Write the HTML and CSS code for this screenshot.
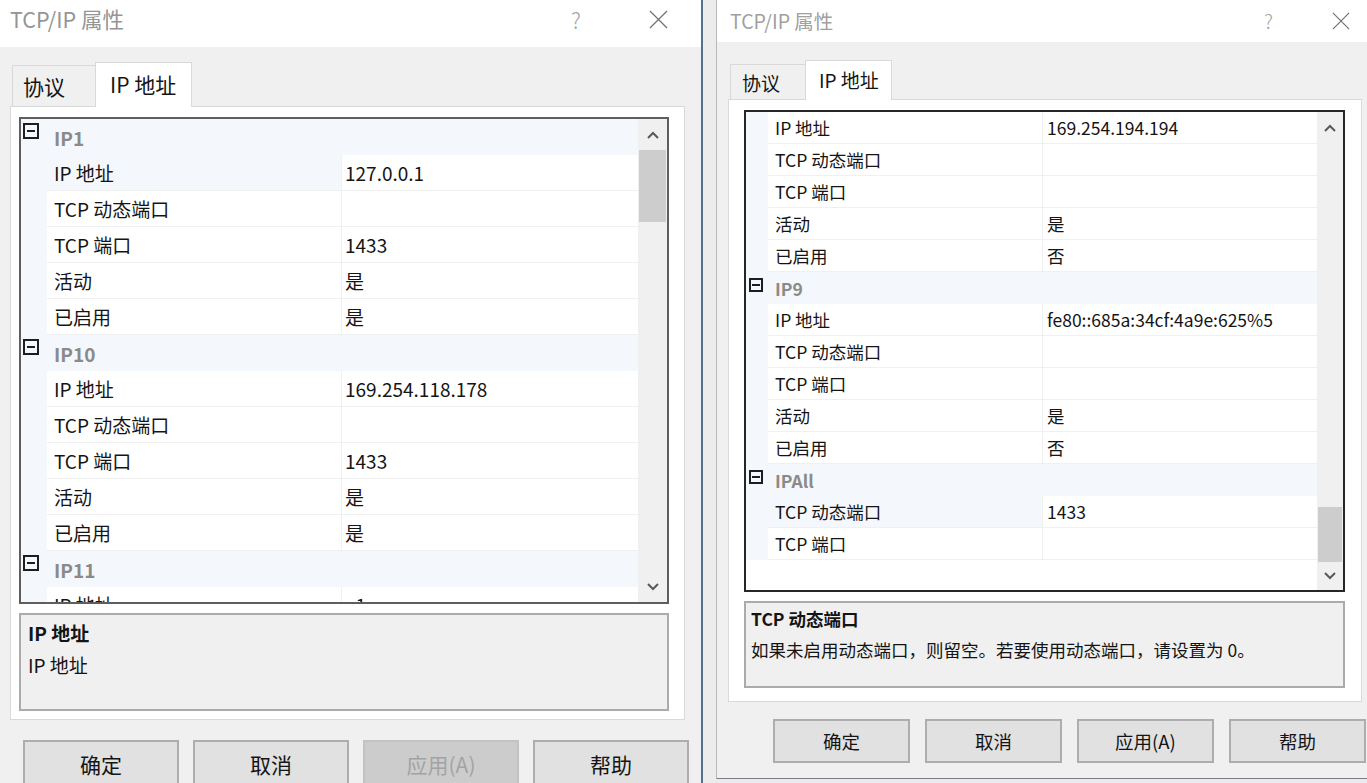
FILE: index.html
```html
<!DOCTYPE html>
<html lang="zh-CN">
<head>
<meta charset="utf-8">
<title>TCP/IP 属性</title>
<link rel="stylesheet" href="styles.css">
</head>
<body>
<div class="screen">
  <div class="win win-a">
    <div class="titlebar">
      <span class="title">TCP/IP 属性</span>
      <span class="help">?</span>
      <svg class="close" viewBox="0 0 20 20"><path d="M1 1L19 19M19 1L1 19"/></svg>
    </div>
    <div class="tabs">
      <div class="tab">协议</div>
      <div class="tab active">IP 地址</div>
    </div>
    <div class="panel">
      <div class="grid">
        <div class="rows">
          <div class="row cat"><div class="gut"><span class="minus"></span></div><div class="cname">IP1</div></div>
          <div class="row sel"><div class="gut"></div><div class="lbl">IP 地址</div><div class="val">127.0.0.1</div></div>
          <div class="row"><div class="gut"></div><div class="lbl">TCP 动态端口</div><div class="val"></div></div>
          <div class="row"><div class="gut"></div><div class="lbl">TCP 端口</div><div class="val">1433</div></div>
          <div class="row"><div class="gut"></div><div class="lbl">活动</div><div class="val">是</div></div>
          <div class="row"><div class="gut"></div><div class="lbl">已启用</div><div class="val">是</div></div>
          <div class="row cat"><div class="gut"><span class="minus"></span></div><div class="cname">IP10</div></div>
          <div class="row"><div class="gut"></div><div class="lbl">IP 地址</div><div class="val">169.254.118.178</div></div>
          <div class="row"><div class="gut"></div><div class="lbl">TCP 动态端口</div><div class="val"></div></div>
          <div class="row"><div class="gut"></div><div class="lbl">TCP 端口</div><div class="val">1433</div></div>
          <div class="row"><div class="gut"></div><div class="lbl">活动</div><div class="val">是</div></div>
          <div class="row"><div class="gut"></div><div class="lbl">已启用</div><div class="val">是</div></div>
          <div class="row cat"><div class="gut"><span class="minus"></span></div><div class="cname">IP11</div></div>
          <div class="row"><div class="gut"></div><div class="lbl">IP 地址</div><div class="val">::1</div></div>
        </div>
        <div class="sb">
          <div class="sb-btn up"><svg viewBox="0 0 12 8"><path d="M1 7L6 2L11 7"/></svg></div>
          <div class="sb-track"><div class="thumb"></div></div>
          <div class="sb-btn down"><svg viewBox="0 0 12 8"><path d="M1 1L6 6L11 1"/></svg></div>
        </div>
      </div>
      <div class="desc">
        <div class="desc-title">IP 地址</div>
        <div class="desc-text">IP 地址</div>
      </div>
    </div>
    <div class="buttons">
      <div class="btn">确定</div>
      <div class="btn">取消</div>
      <div class="btn disabled">应用(A)</div>
      <div class="btn">帮助</div>
    </div>
  </div>

  <div class="divider"></div>
  <div class="gap"></div>

  <div class="win win-b">
    <div class="titlebar">
      <span class="title">TCP/IP 属性</span>
      <span class="help">?</span>
      <svg class="close" viewBox="0 0 20 20"><path d="M1 1L19 19M19 1L1 19"/></svg>
    </div>
    <div class="tabs">
      <div class="tab">协议</div>
      <div class="tab active">IP 地址</div>
    </div>
    <div class="panel">
      <div class="grid">
        <div class="rows">
          <div class="row"><div class="gut"></div><div class="lbl">IP 地址</div><div class="val">169.254.194.194</div></div>
          <div class="row"><div class="gut"></div><div class="lbl">TCP 动态端口</div><div class="val"></div></div>
          <div class="row"><div class="gut"></div><div class="lbl">TCP 端口</div><div class="val"></div></div>
          <div class="row"><div class="gut"></div><div class="lbl">活动</div><div class="val">是</div></div>
          <div class="row"><div class="gut"></div><div class="lbl">已启用</div><div class="val">否</div></div>
          <div class="row cat"><div class="gut"><span class="minus"></span></div><div class="cname">IP9</div></div>
          <div class="row"><div class="gut"></div><div class="lbl">IP 地址</div><div class="val">fe80::685a:34cf:4a9e:625%5</div></div>
          <div class="row"><div class="gut"></div><div class="lbl">TCP 动态端口</div><div class="val"></div></div>
          <div class="row"><div class="gut"></div><div class="lbl">TCP 端口</div><div class="val"></div></div>
          <div class="row"><div class="gut"></div><div class="lbl">活动</div><div class="val">是</div></div>
          <div class="row"><div class="gut"></div><div class="lbl">已启用</div><div class="val">否</div></div>
          <div class="row cat"><div class="gut"><span class="minus"></span></div><div class="cname">IPAll</div></div>
          <div class="row sel"><div class="gut"></div><div class="lbl">TCP 动态端口</div><div class="val">1433</div></div>
          <div class="row"><div class="gut"></div><div class="lbl">TCP 端口</div><div class="val"></div></div>
        </div>
        <div class="sb">
          <div class="sb-btn up"><svg viewBox="0 0 12 8"><path d="M1 7L6 2L11 7"/></svg></div>
          <div class="sb-track"><div class="thumb"></div></div>
          <div class="sb-btn down"><svg viewBox="0 0 12 8"><path d="M1 1L6 6L11 1"/></svg></div>
        </div>
      </div>
      <div class="desc">
        <div class="desc-title">TCP 动态端口</div>
        <div class="desc-text">如果未启用动态端口，则留空。若要使用动态端口，请设置为 0。</div>
      </div>
    </div>
    <div class="buttons">
      <div class="btn">确定</div>
      <div class="btn">取消</div>
      <div class="btn">应用(A)</div>
      <div class="btn">帮助</div>
    </div>
  </div>
</div>
</body>
</html>
```

FILE: styles.css
```css
* { box-sizing: border-box; margin: 0; padding: 0; }

html, body {
  width: 1367px;
  height: 783px;
  overflow: hidden;
}

body {
  background: #e9ebee;
  font-family: "Noto Sans CJK SC", "Noto Sans", sans-serif;
  color: #141414;
}

.screen {
  display: flex;
  align-items: flex-start;
  height: 783px;
}

/* ---------- window ---------- */
.win {
  display: flex;
  flex-direction: column;
  background: #f0f0f0;
  overflow: hidden;
  flex: none;
}

.win-a {
  width: 701px;
  height: 783px;
  --th: 47px; --tpt: 4px; --tfs: 21.5px; --tpl: 10px;
  --help-fs: 22px; --help-mr: 68px; --close: 19px; --close-mr: 33px;
  --tab-fs: 21px; --tabs-mt: 15px; --tabs-ml: 12px; --tabs-h: 44px;
  --tab1-w: 83px; --tab1-h: 41px; --tab1-pl: 10px;
  --tab2-w: 97px; --tab2-h: 45px; --tab2-pl: 14px;
  --panel-ml: 10px; --panel-w: 675px; --panel-h: 614px; --panel-pt: 10px; --panel-pl: 8px;
  --grid-w: 650px; --grid-h: 487px; --grid-b: #5e5e5e;
  --fs: 19px; --row: 36px; --gut: 26px; --lbl: 295px; --vpl: 3px;
  --sb: 29px; --sb-up: 31px; --sb-dn: 31px; --thumb-top: 0px; --thumb-h: 72px;
  --mw: 16px; --mt: 4px; --ml: 2px; --mline: 8px;
  --desc-h: 98px; --desc-pt: 2px; --desc-lh: 32px; --desc-pl: 7px;
  --btn-mt: 20px; --btn-pl: 23px; --btn-w: 156px; --btn-h: 48px; --btn-gap: 14px; --btn-fs: 21px;
}

.win-b {
  width: 651px;
  height: 779px;
  border-left: 1px solid #b8b8b8;
  border-bottom: 1px solid #7c7c7c;
  --th: 42px; --tpt: 6px; --tfs: 19.5px; --tpl: 13px;
  --help-fs: 20px; --help-mr: 59px; --close: 18px; --close-mr: 17px;
  --tab-fs: 19px; --tabs-mt: 18px; --tabs-ml: 13px; --tabs-h: 39px;
  --tab1-w: 75px; --tab1-h: 35px; --tab1-pl: 11px;
  --tab2-w: 87px; --tab2-h: 40px; --tab2-pl: 13px;
  --panel-ml: 11px; --panel-w: 634px; --panel-h: 603px; --panel-pt: 10px; --panel-pl: 15px;
  --grid-w: 601px; --grid-h: 482px; --grid-b: #262626;
  --fs: 17.5px; --row: 32px; --gut: 22px; --lbl: 275px; --vpl: 4px;
  --sb: 26px; --sb-up: 31px; --sb-dn: 28px; --thumb-top: 364px; --thumb-h: 55px;
  --mw: 14px; --mt: 6px; --ml: 3px; --mline: 8px;
  --desc-h: 87px; --desc-pt: 0px; --desc-lh: 31px; --desc-pl: 5px;
  --btn-mt: 17px; --btn-pl: 56px; --btn-w: 137px; --btn-h: 44px; --btn-gap: 15px; --btn-fs: 18.5px;
}

.divider {
  width: 2px;
  height: 783px;
  background: #566f8e;
  flex: none;
}

.gap {
  width: 13px;
  height: 783px;
  background: #ececec;
  flex: none;
}

/* ---------- title bar ---------- */
.titlebar {
  height: var(--th);
  flex: none;
  background: #ffffff;
  display: flex;
  align-items: flex-start;
  padding-top: var(--tpt);
  padding-left: var(--tpl);
}

.title {
  flex: 1;
  font-size: var(--tfs);
  line-height: 30px;
  color: #959595;
  white-space: nowrap;
}

.win-b .title { color: #a0a0a0; }

.help {
  font-size: var(--help-fs);
  line-height: 30px;
  color: #a2a2a2;
  margin-right: var(--help-mr);
  font-weight: 300;
}

.close {
  width: var(--close);
  height: var(--close);
  margin-top: 6px;
  margin-right: var(--close-mr);
  fill: none;
  stroke: #707070;
  stroke-width: 1.3;
}

/* ---------- tabs ---------- */
.tabs {
  display: flex;
  align-items: flex-end;
  height: var(--tabs-h);
  margin-top: var(--tabs-mt);
  margin-left: var(--tabs-ml);
  flex: none;
}

.tab {
  font-size: var(--tab-fs);
  display: flex;
  align-items: center;
  border: 1px solid #d9d9d9;
  border-bottom: none;
  background: #f0f0f0;
  white-space: nowrap;
}

.tab:first-child {
  width: var(--tab1-w);
  height: var(--tab1-h);
  padding-left: var(--tab1-pl);
  border-right: none;
}

.tab.active {
  width: var(--tab2-w);
  height: var(--tab2-h);
  padding-left: var(--tab2-pl);
  padding-bottom: 3px;
  margin-bottom: -1px;
  background: #ffffff;
  position: relative;
  z-index: 1;
}

/* ---------- panel ---------- */
.panel {
  width: var(--panel-w);
  height: var(--panel-h);
  margin-left: var(--panel-ml);
  background: #ffffff;
  border: 1px solid #d9d9d9;
  padding-top: var(--panel-pt);
  padding-left: var(--panel-pl);
  flex: none;
}

.grid {
  width: var(--grid-w);
  height: var(--grid-h);
  border: 2px solid var(--grid-b);
  display: flex;
  background: #ffffff;
}

.rows {
  flex: 1;
  overflow: hidden;
}

.row {
  display: grid;
  grid-template-columns: var(--gut) var(--lbl) 1fr;
  height: var(--row);
  font-size: var(--fs);
}

.gut { background: #f4f7fb; }

.lbl, .val {
  display: flex;
  align-items: center;
  white-space: nowrap;
  border-bottom: 1px solid #f0f0f0;
  overflow: hidden;
}

.lbl {
  padding-left: 7px;
  border-right: 1px solid #f0f0f0;
}

.val { padding-left: var(--vpl); }

.row.sel .lbl { background: #f4f7fb; }

.row.cat { background: #f4f7fb; }

.cname {
  grid-column: 2 / 4;
  padding-left: 7px;
  display: flex;
  align-items: center;
  font-weight: 700;
  color: #8a8a8a;
}

.minus {
  display: block;
  width: var(--mw);
  height: var(--mw);
  margin-top: var(--mt);
  margin-left: var(--ml);
  border: 2px solid #1e1e1e;
  background: linear-gradient(#1e1e1e, #1e1e1e) center / var(--mline) 2px no-repeat;
}

/* ---------- scrollbar ---------- */
.sb {
  width: var(--sb);
  flex: none;
  background: #f0f0f0;
  display: flex;
  flex-direction: column;
}

.sb-btn {
  display: flex;
  align-items: center;
  justify-content: center;
  flex: none;
}

.sb-btn.up { height: var(--sb-up); }
.sb-btn.down { height: var(--sb-dn); }

.sb-btn svg {
  width: 12px;
  height: 8px;
  fill: none;
  stroke: #5a5a5a;
  stroke-width: 2;
}

.sb-track { flex: 1; }

.thumb {
  margin: var(--thumb-top) 1px 0 1px;
  height: var(--thumb-h);
  background: #cdcdcd;
}

/* ---------- description ---------- */
.desc {
  width: var(--grid-w);
  height: var(--desc-h);
  margin-top: 9px;
  border: 2px solid #ababab;
  background: #f0f0f0;
  padding-top: var(--desc-pt);
  padding-left: var(--desc-pl);
  font-size: var(--fs);
  line-height: var(--desc-lh);
}

.desc-title { font-weight: 700; }

.desc-text { white-space: nowrap; }

/* ---------- buttons ---------- */
.buttons {
  display: flex;
  gap: var(--btn-gap);
  margin-top: var(--btn-mt);
  padding-left: var(--btn-pl);
  flex: none;
}

.btn {
  width: var(--btn-w);
  height: var(--btn-h);
  flex: none;
  display: flex;
  align-items: center;
  justify-content: center;
  background: #e1e1e1;
  border: 2px solid #adadad;
  font-size: var(--btn-fs);
}

.btn.disabled {
  background: #cccccc;
  border-color: #c2c2c2;
  color: #a3a3a3;
}
```
